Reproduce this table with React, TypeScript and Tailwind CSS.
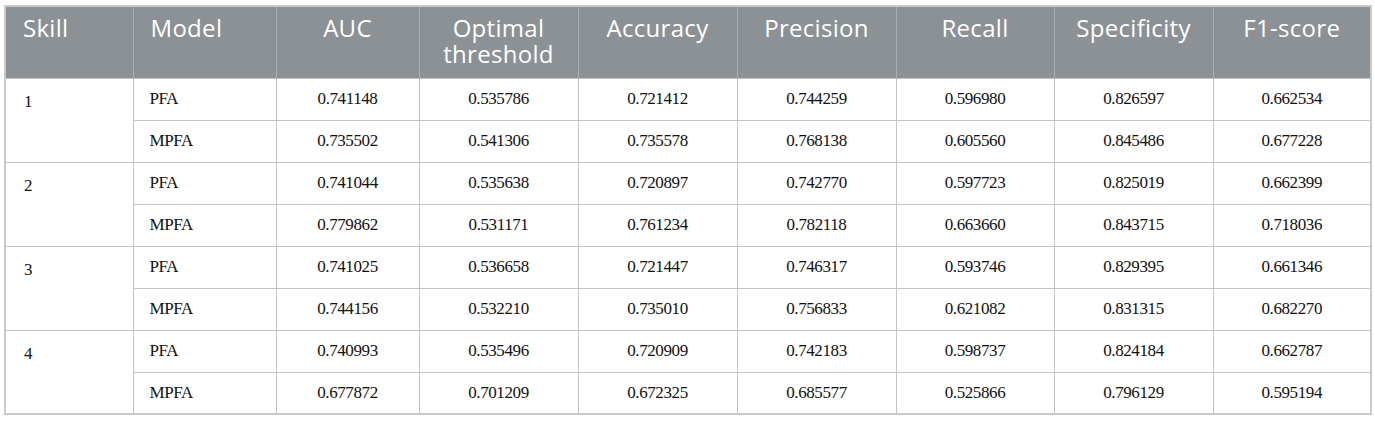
const rows = [
  ["1", "PFA", "0.741148", "0.535786", "0.721412", "0.744259", "0.596980", "0.826597", "0.662534"],
  ["", "MPFA", "0.735502", "0.541306", "0.735578", "0.768138", "0.605560", "0.845486", "0.677228"],
  ["2", "PFA", "0.741044", "0.535638", "0.720897", "0.742770", "0.597723", "0.825019", "0.662399"],
  ["", "MPFA", "0.779862", "0.531171", "0.761234", "0.782118", "0.663660", "0.843715", "0.718036"],
  ["3", "PFA", "0.741025", "0.536658", "0.721447", "0.746317", "0.593746", "0.829395", "0.661346"],
  ["", "MPFA", "0.744156", "0.532210", "0.735010", "0.756833", "0.621082", "0.831315", "0.682270"],
  ["4", "PFA", "0.740993", "0.535496", "0.720909", "0.742183", "0.598737", "0.824184", "0.662787"],
  ["", "MPFA", "0.677872", "0.701209", "0.672325", "0.685577", "0.525866", "0.796129", "0.595194"],
];

const widths = [128, 143, 143, 159, 159, 159, 158, 159, 158];
const heads = ["Skill", "Model", "AUC", "Optimal threshold", "Accuracy", "Precision", "Recall", "Specificity", "F1-score"];

export default function App() {
  return (
    <div className="w-[1375px] h-[422px] bg-white pt-[5px] pl-[4px]">
      <table className="border-collapse table-fixed border-2 border-[#c9c9c9]" style={{ width: 1367 }}>
        <colgroup>
          {widths.map((w, i) => (
            <col key={i} style={{ width: w }} />
          ))}
        </colgroup>
        <thead>
          <tr className="h-[72px] bg-[#8b9195]">
            {heads.map((h, i) => (
              <th
                key={h}
                className={`align-top pt-[8px] border-x border-[#a9adb0] font-normal text-white text-[24px] leading-[26px] tracking-[0.3px] font-['Open_Sans',sans-serif] ${
                  i < 2 ? "text-left pl-[17px]" : "text-center px-[8px]"
                }`}
              >
                {h}
              </th>
            ))}
          </tr>
        </thead>
        <tbody className="font-['Liberation_Serif',serif] text-[17px] tracking-[-0.4px] text-[#111]">
          {rows.map((r, ri) => (
            <tr key={ri} className="h-[42px]">
              {r.map((c, ci) => {
                if (ci === 0) {
                  if (ri % 2 === 1) return null;
                  return (
                    <td key={ci} rowSpan={2} className="align-top pt-[10px] pl-[18px] border border-[#c4c4c4]">
                      {c}
                    </td>
                  );
                }
                return (
                  <td
                    key={ci}
                    className={`border border-[#c4c4c4] ${ci === 1 ? "text-left pl-[16px]" : "text-center"}`}
                  >
                    {c}
                  </td>
                );
              })}
            </tr>
          ))}
        </tbody>
      </table>
    </div>
  );
}
